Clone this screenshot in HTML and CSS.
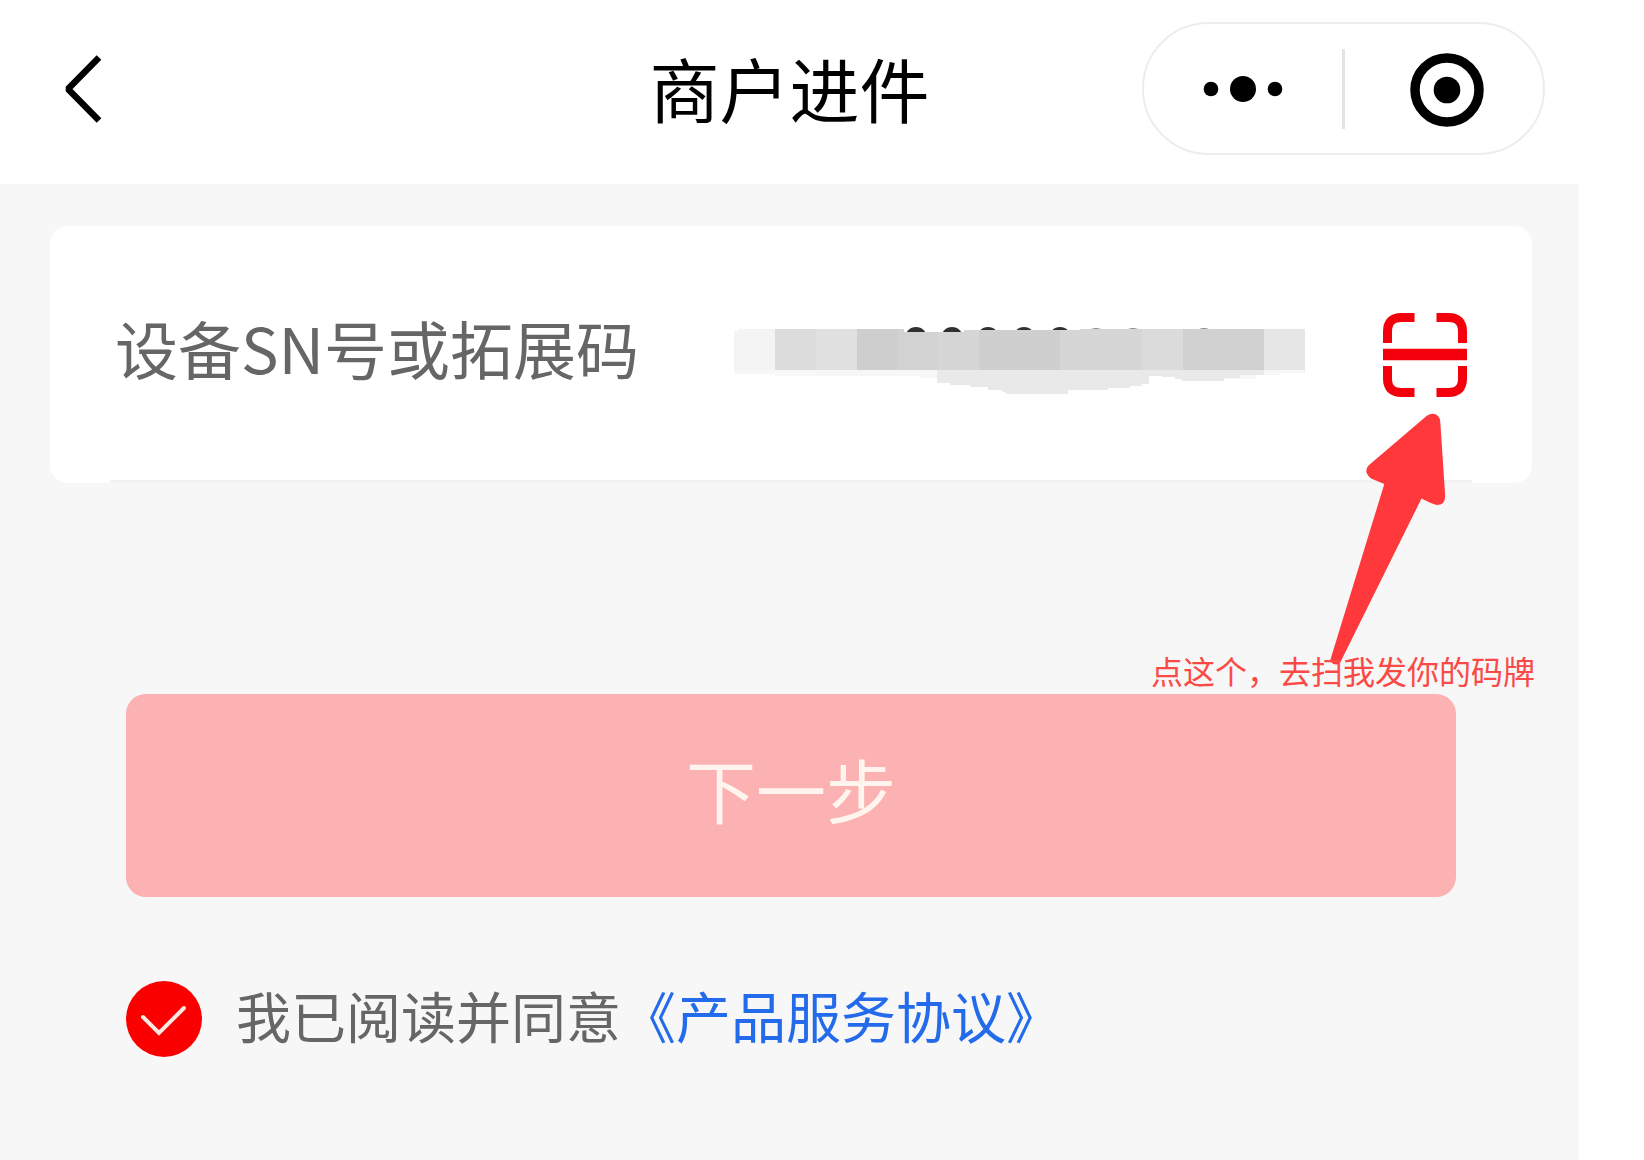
FILE: index.html
```html
<!DOCTYPE html>
<html lang="zh-CN">
<head>
<meta charset="utf-8">
<meta name="viewport" content="width=device-width, initial-scale=1">
<title>商户进件</title>
<link rel="stylesheet" href="styles.css">
</head>
<body>
<div class="app">
  <header class="navbar">
    <button class="back" type="button" aria-label="返回">
      <svg width="40" height="72" viewBox="0 0 40 72" fill="none" stroke="#000" stroke-width="6.500"><path d="M35 4.500 4 36 35 67.500" stroke-linejoin="bevel"/></svg>
    </button>
    <h1 class="title">商户进件</h1>
    <div class="capsule">
      <button class="capsule-btn more" type="button" aria-label="更多">
        <svg width="80" height="28" viewBox="0 0 80 28"><circle cx="8" cy="14" r="7.300"/><circle cx="40" cy="14" r="13"/><circle cx="72" cy="14" r="7.300"/></svg>
      </button>
      <span class="divider"></span>
      <button class="capsule-btn close" type="button" aria-label="关闭">
        <svg width="84" height="80" viewBox="0 0 84 80"><circle cx="45" cy="41" r="32" fill="none" stroke="#000" stroke-width="9.500"/><circle cx="45" cy="41" r="13.300"/></svg>
      </button>
    </div>
  </header>

  <main class="content">
    <form class="form">
      <div class="card">
        <div class="row">
          <label class="label" for="sn">设备SN号或拓展码</label>
          <div class="field">
            <input class="input" id="sn" type="text">
            <svg class="mask" width="580" height="90" viewBox="730 310 580 90" aria-hidden="true">
              <g fill="#303030"><circle cx="916" cy="338" r="11"/><circle cx="952" cy="338" r="11"/><circle cx="988" cy="338" r="11"/><circle cx="1024" cy="338" r="11"/><circle cx="1060" cy="338" r="11"/></g>
              <g fill="#888"><circle cx="1096" cy="339" r="11"/><circle cx="1133" cy="339" r="11"/><circle cx="1204" cy="339" r="11"/></g>
              <path fill="#f7f7f7" d="M734 366H940V378H920V376H775V374H734zM1183 366H1305V373H1280V375H1256V379H1183z"/>
              <path fill="#e9e9e9" d="M937 366H1264V375H1240V378H1224V381H1182V379H1175V377H1162V376H1149V384H1142V386H1130V388H1108V390H1068V394H1006V392H1002V390H988V387H970V385H950V383H937z"/>
              <g shape-rendering="crispEdges">
                <path fill="#f4f4f4" d="M734 331h4v-2h37v41h-41z"/>
                <path fill="#dcdcdc" d="M775 329h41v41h-41z"/>
                <path fill="#e0e0e0" d="M816 329h41v41h-41z"/>
                <path fill="#cecece" d="M857 329h41v41h-41z"/>
                <path fill="#d2d2d2" d="M898 329h6v3h34v38h-40z"/>
                <path fill="#d6d6d6" d="M938 332h26v-2h15v40h-41z"/>
                <path fill="#cfcfcf" d="M979 330h81v40h-81z"/>
                <path fill="#d6d6d6" d="M1060 330h20v-1h62v41h-82z"/>
                <path fill="#dbdbdb" d="M1142 329h41v41h-41z"/>
                <path fill="#d1d1d1" d="M1183 329h81v41h-81z"/>
                <path fill="#e6e6e6" d="M1264 329h41v41h-41z"/>
              </g>
            </svg>
          </div>
          <button class="scan" type="button" aria-label="扫码">
            <svg width="84" height="84" viewBox="0 0 84 84" fill="none" stroke="#f4000c" stroke-width="9"><path d="M4.500 30V18.500Q4.500 4.500 18.500 4.500H31.500M53.500 4.500H65.500Q79.500 4.500 79.500 18.500V30M4.500 53V65.500Q4.500 79.500 18.500 79.500H31.500M53.500 79.500H65.500Q79.500 79.500 79.500 65.500V53"/><path d="M0 41.500H84" stroke-width="11.500"/></svg>
          </button>
        </div>
      </div>

      <div class="actions">
        <button class="submit" type="button">下一步</button>
        <div class="agreement">
          <span class="tick">
            <input class="checkbox" id="agree" type="checkbox" checked>
            <svg class="tick-mark" width="76" height="76" viewBox="0 0 76 76" fill="none" stroke="#ffe8e2" stroke-width="4" stroke-linecap="round" aria-hidden="true"><path d="M17 36 33 52 58 27"/></svg>
          </span>
          <label class="agree-text" for="agree">我已阅读并同意</label><a class="agree-link" href="#agreement">《产品服务协议》</a>
        </div>
      </div>
    </form>

    <div class="hint">
      <svg class="hint-arrow" width="124" height="254" viewBox="1324 412 124 254" fill="#ff383c" aria-hidden="true"><path d="M1426.500 416Q1430 413.500 1433 413.700Q1440 414.500 1440.300 422L1445.200 496Q1445 505 1437 505Q1434 505 1421.500 498.500L1340 663Q1335 667 1330 661L1384.300 484L1371 478.500Q1363 472 1368.500 465.500z"/></svg>
      <p class="hint-text">点这个，去扫我发你的码牌</p>
    </div>
  </main>
</div>
</body>
</html>
```

FILE: styles.css
```css
* {
  box-sizing: border-box;
}

body {
  margin: 0;
  background: #fff;
  font-family: "Noto Sans CJK SC", sans-serif;
}

button {
  display: flex;
  align-items: center;
  justify-content: center;
  padding: 0;
  border: 0;
  background: none;
  font: inherit;
  cursor: pointer;
}

svg {
  display: block;
}

.app {
  display: flex;
  flex-direction: column;
  min-height: 100vh;
  margin-right: 65px;
}

.navbar {
  display: grid;
  grid-template-columns: 1fr auto 1fr;
  align-items: center;
  padding: 22px 34px 29px;
  background: #fff;
}

.back {
  justify-self: start;
  margin-left: 30px;
}

.title {
  margin: 0;
  padding-bottom: 2px;
  font-size: 70px;
  line-height: 100px;
  font-weight: 400;
  color: #000;
}

.capsule {
  display: flex;
  align-items: center;
  justify-self: end;
  width: 403px;
  height: 133px;
  border: 2px solid #ededed;
  border-radius: 67px;
}

.capsule-btn {
  flex: 1;
  height: 100%;
}

.divider {
  width: 3px;
  height: 80px;
  background: #e4e4e4;
}

.content {
  position: relative;
  flex: 1;
  padding: 42px 47px 100px 50px;
  background: #f7f7f7;
}

.card {
  padding: 0 60px;
  border-radius: 18px;
  background: #fff;
}

.row {
  display: flex;
  align-items: center;
  height: 257px;
  padding: 4px 5px 0;
  border-bottom: 3px solid #f3f3f3;
}

.label {
  padding-bottom: 16px;
  font-size: 63px;
  line-height: 90px;
  color: #666;
  white-space: nowrap;
}

.field {
  position: relative;
  flex: 1;
  height: 90px;
  margin: 0 73px 0 88px;
}

.input {
  width: 100%;
  height: 100%;
  padding: 0;
  border: 0;
  outline: 0;
  background: none;
  font: inherit;
  font-size: 63px;
}

.mask {
  position: absolute;
  top: 0;
  right: 0;
}

.actions {
  padding: 211px 76px 0;
}

.submit {
  width: 100%;
  height: 203px;
  padding-bottom: 14px;
  border-radius: 20px;
  background: #fcb1b3;
  font-size: 70px;
  line-height: 100px;
  color: #fff5ee;
}

.agreement {
  display: flex;
  align-items: center;
  margin-top: 83px;
  font-size: 55px;
  line-height: 76px;
  white-space: nowrap;
}

.tick {
  position: relative;
  width: 76px;
  height: 76px;
  margin-right: 34px;
}

.checkbox {
  appearance: none;
  display: block;
  width: 76px;
  height: 76px;
  margin: 0;
  border-radius: 50%;
  background: #fff;
}

.checkbox:checked {
  background: #fa0000;
}

.tick-mark {
  position: absolute;
  inset: 0;
  pointer-events: none;
}

.agree-text,
.agree-link {
  line-height: 68px;
  padding-bottom: 10px;
}

.agree-text {
  color: #666;
}

.agree-link {
  color: #236bea;
  text-decoration: none;
}

.hint {
  position: absolute;
  top: 228px;
  right: 44px;
  display: flex;
  flex-direction: column;
  align-items: flex-end;
  pointer-events: none;
}

.hint-arrow {
  margin-right: 87px;
}

.hint-text {
  position: relative;
  margin: -19px 0 0;
  font-size: 32px;
  line-height: 46px;
  color: #fb4a45;
}
```
